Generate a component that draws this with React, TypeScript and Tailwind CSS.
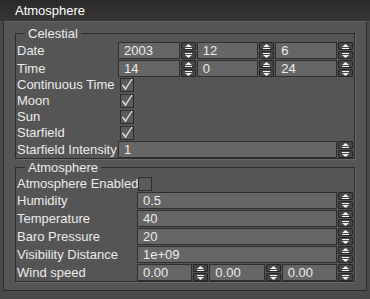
import type { ReactNode } from 'react';

const font = { fontFamily: '"Liberation Sans", Arial, sans-serif' };

function Arrow({ up }: { up: boolean }) {
  return (
    <svg width="7" height="5" viewBox="0 0 7 5" className="block">
      {up ? (
        <>
          <path d="M3.5 0 L7 3 L0 3 Z" fill="#f2f2f2" />
          <rect x="0" y="4" width="7" height="1" fill="#f2f2f2" />
        </>
      ) : (
        <>
          <rect x="0" y="0" width="7" height="1" fill="#f2f2f2" />
          <path d="M0 2 L7 2 L3.5 5 Z" fill="#f2f2f2" />
        </>
      )}
    </svg>
  );
}

function Spinner() {
  return (
    <div className="flex flex-col justify-center gap-[1px] w-[15px] shrink-0">
      <div className="h-[8px] flex items-center justify-center bg-[#464646] border border-[#252525] rounded-[1px]">
        <Arrow up />
      </div>
      <div className="h-[8px] flex items-center justify-center bg-[#464646] border border-[#252525] rounded-[1px]">
        <Arrow up={false} />
      </div>
    </div>
  );
}

function SpinBox({ value }: { value: string }) {
  return (
    <div className="flex-1 flex gap-[1px] min-w-0">
      <div className="flex-1 min-w-0 h-[17px] bg-[#666666] border border-[#2e2e2e] text-[#ececec] text-[13px] leading-[15px] pl-[5px]">
        {value}
      </div>
      <Spinner />
    </div>
  );
}

function Check({ on }: { on: boolean }) {
  return (
    <div className="w-[14px] h-[14px] bg-[#5b5b5b] border border-[#2c2c2c] relative">
      {on && (
        <svg width="14" height="14" viewBox="0 0 14 14" className="absolute -left-[1px] -top-[1px] overflow-visible">
          <path d="M2.5 7 L5.5 11 L12 1" fill="none" stroke="#e6e6e6" strokeWidth="1.3" />
        </svg>
      )}
    </div>
  );
}

function Row({ label, labelW, h = 'h-[17px]', children }: { label: string; labelW: string; h?: string; children: ReactNode }) {
  return (
    <div className={`flex items-center ${h}`}>
      <div className={`${labelW} shrink-0 pl-[1px] text-[13px] text-[#ececec] whitespace-nowrap`}>{label}</div>
      <div className="flex-1 flex gap-[1px] items-center">{children}</div>
    </div>
  );
}

function Group({ title, children }: { title: string; children: ReactNode }) {
  return (
    <fieldset className="border border-[#2c2c2c] shadow-[1px_1px_0_#6a6a6a] px-0 pr-[1px]">
      <legend className="ml-[9px] px-[3px] text-[13px] leading-[15px] text-[#ececec]">{title}</legend>
      {children}
    </fieldset>
  );
}

export default function App() {
  return (
    <div className="w-[370px] h-[299px] bg-[#4a4a4a] flex flex-col overflow-hidden" style={font}>
      <div className="h-[21px] shrink-0 bg-gradient-to-b from-[#2a2a2a] to-[#363636] pl-[15px] text-[13px] leading-[21px] text-white">
        Atmosphere
      </div>
      <div className="mx-[3px] h-[270px] bg-[#555555] border border-[#2a2a2a] border-t-[#626262] px-[11px] pt-[4px]">
        <Group title="Celestial">
          <div className="flex flex-col gap-[1px] pt-[1px]">
            <Row label="Date" labelW="w-[102px]">
              <SpinBox value="2003" />
              <SpinBox value="12" />
              <SpinBox value="6" />
            </Row>
            <Row label="Time" labelW="w-[102px]">
              <SpinBox value="14" />
              <SpinBox value="0" />
              <SpinBox value="24" />
            </Row>
          </div>
          <Row label="Continuous Time" labelW="w-[104px]" h="h-[16px]"><Check on /></Row>
          <Row label="Moon" labelW="w-[104px]" h="h-[16px]"><Check on /></Row>
          <Row label="Sun" labelW="w-[104px]" h="h-[16px]"><Check on /></Row>
          <Row label="Starfield" labelW="w-[104px]" h="h-[16px]"><Check on /></Row>
          <Row label="Starfield Intensity" labelW="w-[102px]">
            <SpinBox value="1" />
          </Row>
        </Group>
        <div className="h-[1px]" />
        <Group title="Atmosphere">
          <Row label="Atmosphere Enabled" labelW="w-[122px]" h="h-[17px]"><Check on={false} /></Row>
          <div className="flex flex-col gap-[1px]">
            <Row label="Humidity" labelW="w-[121px]"><SpinBox value="0.5" /></Row>
            <Row label="Temperature" labelW="w-[121px]"><SpinBox value="40" /></Row>
            <Row label="Baro Pressure" labelW="w-[121px]"><SpinBox value="20" /></Row>
            <Row label="Visibility Distance" labelW="w-[121px]"><SpinBox value="1e+09" /></Row>
            <Row label="Wind speed" labelW="w-[121px]">
              <SpinBox value="0.00" />
              <SpinBox value="0.00" />
              <SpinBox value="0.00" />
            </Row>
          </div>
        </Group>
      </div>
    </div>
  );
}
